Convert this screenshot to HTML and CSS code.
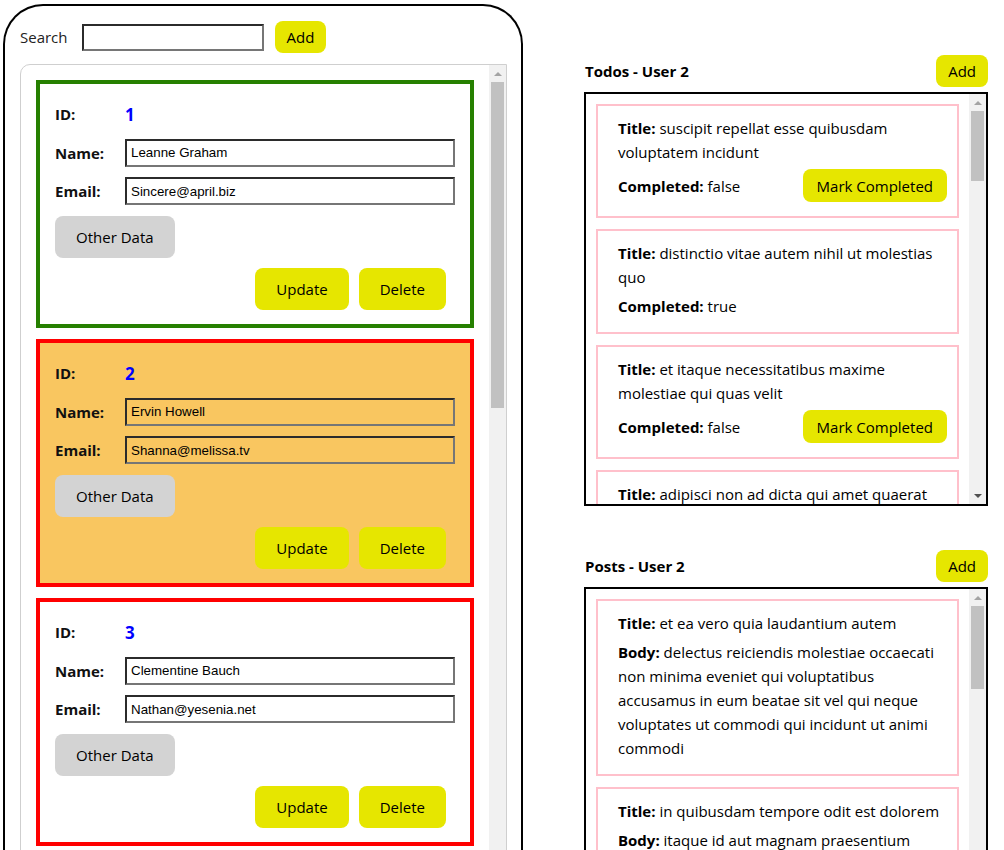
FILE: index.html
```html
<!DOCTYPE html>
<html lang="en">
<head>
<meta charset="utf-8">
<title>Users</title>
<link rel="stylesheet" href="styles.css">
</head>
<body>
<div class="app">
  <section class="users-panel">
    <div class="search-row">
      <label class="search-label">Search</label>
      <input class="search-input" type="text">
      <button class="btn btn-yellow btn-small">Add</button>
    </div>
    <div class="user-list">
      <div class="user-list-content">
        <div class="user-card done">
          <div class="row"><span class="lbl">ID:</span><span class="uid">1</span></div>
          <div class="row"><span class="lbl">Name:</span><input class="field" type="text" value="Leanne Graham"></div>
          <div class="row"><span class="lbl">Email:</span><input class="field" type="text" value="Sincere@april.biz"></div>
          <button class="btn btn-gray">Other Data</button>
          <div class="actions"><button class="btn btn-yellow btn-big">Update</button><button class="btn btn-yellow btn-big">Delete</button></div>
        </div>
        <div class="user-card selected">
          <div class="row"><span class="lbl">ID:</span><span class="uid">2</span></div>
          <div class="row"><span class="lbl">Name:</span><input class="field" type="text" value="Ervin Howell"></div>
          <div class="row"><span class="lbl">Email:</span><input class="field" type="text" value="Shanna@melissa.tv"></div>
          <button class="btn btn-gray">Other Data</button>
          <div class="actions"><button class="btn btn-yellow btn-big">Update</button><button class="btn btn-yellow btn-big">Delete</button></div>
        </div>
        <div class="user-card">
          <div class="row"><span class="lbl">ID:</span><span class="uid">3</span></div>
          <div class="row"><span class="lbl">Name:</span><input class="field" type="text" value="Clementine Bauch"></div>
          <div class="row"><span class="lbl">Email:</span><input class="field" type="text" value="Nathan@yesenia.net"></div>
          <button class="btn btn-gray">Other Data</button>
          <div class="actions"><button class="btn btn-yellow btn-big">Update</button><button class="btn btn-yellow btn-big">Delete</button></div>
        </div>
      </div>
      <div class="scrollbar">
        <div class="sb-arrow"><span class="tri-up"></span></div>
        <div class="sb-thumb users-thumb"></div>
      </div>
    </div>
  </section>

  <section class="side">
    <div class="side-head">
      <span class="side-title">Todos - User 2</span>
      <button class="btn btn-yellow btn-small">Add</button>
    </div>
    <div class="side-box">
      <div class="side-content">
        <div class="item"><div class="txt"><b>Title:</b> suscipit repellat esse quibusdam voluptatem incidunt</div><div class="done-row"><span><b>Completed:</b> false</span><button class="btn btn-yellow btn-small btn-mark">Mark Completed</button></div></div>
        <div class="item"><div class="txt"><b>Title:</b> distinctio vitae autem nihil ut molestias quo</div><div class="txt"><b>Completed:</b> true</div></div>
        <div class="item"><div class="txt"><b>Title:</b> et itaque necessitatibus maxime molestiae qui quas velit</div><div class="done-row"><span><b>Completed:</b> false</span><button class="btn btn-yellow btn-small btn-mark">Mark Completed</button></div></div>
        <div class="item"><div class="txt"><b>Title:</b> adipisci non ad dicta qui amet quaerat doloribus ea</div><div class="done-row"><span><b>Completed:</b> false</span><button class="btn btn-yellow btn-small btn-mark">Mark Completed</button></div></div>
      </div>
      <div class="scrollbar">
        <div class="sb-arrow"><span class="tri-up"></span></div>
        <div class="sb-thumb todos-thumb"></div>
        <div class="sb-fill"></div>
        <div class="sb-arrow"><span class="tri-down"></span></div>
      </div>
    </div>

    <div class="side-head posts-head">
      <span class="side-title">Posts - User 2</span>
      <button class="btn btn-yellow btn-small">Add</button>
    </div>
    <div class="side-box">
      <div class="side-content">
        <div class="item"><div class="txt"><b>Title:</b> et ea vero quia laudantium autem</div><div class="txt"><b>Body:</b> delectus reiciendis molestiae occaecati non minima eveniet qui voluptatibus
accusamus in eum beatae sit
vel qui neque voluptates ut commodi qui incidunt
ut animi commodi</div></div>
        <div class="item"><div class="txt"><b>Title:</b> in quibusdam tempore odit est dolorem</div><div class="txt"><b>Body:</b> itaque id aut magnam
praesentium quia et ea odit et ea voluptas et
sapiente quia nihil amet occaecati quia id voluptatem
incidunt ea est distinctio odio</div></div>
      </div>
      <div class="scrollbar">
        <div class="sb-arrow"><span class="tri-up"></span></div>
        <div class="sb-thumb posts-thumb"></div>
      </div>
    </div>
  </section>
</div>
</body>
</html>
```

FILE: styles.css
```css
html, body {
  margin: 0;
  padding: 0;
  overflow: hidden;
  background: #fff;
}

body {
  font-family: "Open Sans", "Noto Sans", sans-serif;
  font-size: 15px;
  color: #000;
}

.app {
  display: flex;
  align-items: flex-start;
  padding: 4px 0 0 3px;
}

.users-panel {
  width: 520px;
  height: 1000px;
  box-sizing: border-box;
  border: 2px solid #000;
  border-bottom: none;
  border-radius: 40px 40px 0 0;
  padding: 15px 14px 0 15px;
  flex-shrink: 0;
}

.search-row {
  display: flex;
  align-items: center;
  height: 32px;
}

.search-label {
  color: #222;
  margin-right: 14px;
}

.search-input {
  width: 182px;
  height: 27px;
  box-sizing: border-box;
  border-width: 2px;
  border-style: solid;
  border-color: #2b2b2b #767676 #767676 #2b2b2b;
  margin: 0 11px 0 0;
  padding: 0 4px;
  font-family: "Liberation Sans", Arial, sans-serif;
  font-size: 13.33px;
  background: #fff;
}

.btn {
  font-family: "Open Sans", "Noto Sans", sans-serif;
  font-size: 15px;
  color: #000;
  border: none;
  cursor: pointer;
  margin: 0;
}

.btn-yellow {
  background: #e6e600;
}

.btn-small {
  padding: 5px 12px;
  line-height: 22px;
  border-radius: 8px;
}

.btn-big {
  padding: 10px 21px;
  line-height: 22px;
  border-radius: 8px;
}

.btn-gray {
  background: #d3d3d3;
  padding: 10px 21px;
  line-height: 22px;
  border-radius: 8px;
  align-self: flex-start;
}

/* user list with its scrollbar */
.user-list {
  margin-top: 11px;
  height: 940px;
  box-sizing: border-box;
  border: 1px solid #cfcfcf;
  border-radius: 10px 0 0 0;
  overflow: hidden;
  display: flex;
}

.user-list-content {
  flex: 1;
  min-width: 0;
  padding: 15px;
  display: flex;
  flex-direction: column;
  gap: 11px;
}

.scrollbar {
  width: 17px;
  flex-shrink: 0;
  background: #f1f1f1;
  display: flex;
  flex-direction: column;
}

.sb-arrow {
  height: 17px;
  flex-shrink: 0;
  display: flex;
  align-items: center;
  justify-content: center;
}

.tri-up {
  width: 0;
  height: 0;
  border-left: 4px solid transparent;
  border-right: 4px solid transparent;
  border-bottom: 4px solid #a3a3a3;
}

.tri-down {
  width: 0;
  height: 0;
  border-left: 4px solid transparent;
  border-right: 4px solid transparent;
  border-top: 4px solid #505050;
}

.sb-thumb {
  margin: 0 2px;
  background: #c1c1c1;
  flex-shrink: 0;
}

.sb-fill {
  flex: 1;
}

.users-thumb {
  height: 326px;
}

.todos-thumb {
  height: 70px;
}

.posts-thumb {
  height: 83px;
}

.user-card {
  flex-shrink: 0;
  border: 4px solid #ff0000;
  padding: 16px 15px 14px 15px;
  display: flex;
  flex-direction: column;
  gap: 10.5px;
}

.user-card.done {
  border-color: #268000;
}

.user-card.selected {
  background: #f9c660;
}

.row {
  display: flex;
  align-items: center;
  height: 28px;
}

.lbl {
  width: 70px;
  flex-shrink: 0;
  font-weight: 700;
  color: #111;
}

.uid {
  color: #0000ff;
  font-weight: 700;
  font-size: 17px;
}

.field {
  width: 330px;
  height: 28px;
  box-sizing: border-box;
  border-width: 2px;
  border-style: solid;
  border-color: #2b2b2b #767676 #767676 #2b2b2b;
  background: transparent;
  padding: 0 4px;
  margin: 0;
  font-family: "Liberation Sans", Arial, sans-serif;
  font-size: 13.33px;
  color: #000;
}

.actions {
  display: flex;
  justify-content: flex-end;
  gap: 10px;
  padding-right: 9px;
}

/* right column */
.side {
  width: 404px;
  margin-left: 61px;
  margin-top: 51px;
  flex-shrink: 0;
}

.side-head {
  display: flex;
  justify-content: space-between;
  align-items: center;
  padding-left: 1px;
}

.posts-head {
  margin-top: 44px;
}

.side-title {
  font-weight: 700;
}

.side-box {
  margin-top: 5px;
  height: 414px;
  box-sizing: border-box;
  border: 2px solid #000;
  overflow: hidden;
  display: flex;
}

.side-content {
  flex: 1;
  min-width: 0;
  padding: 10px;
  display: flex;
  flex-direction: column;
  gap: 11px;
}

.item {
  flex-shrink: 0;
  border: 2px solid #ffc0cb;
  padding: 10px 10px 14px 20px;
  line-height: 24px;
  display: flex;
  flex-direction: column;
  gap: 5px;
}

.txt {
  padding-right: 3px;
}

.done-row {
  display: flex;
  justify-content: space-between;
  align-items: center;
}

.btn-mark {
  padding: 5.5px 14px;
}
```
